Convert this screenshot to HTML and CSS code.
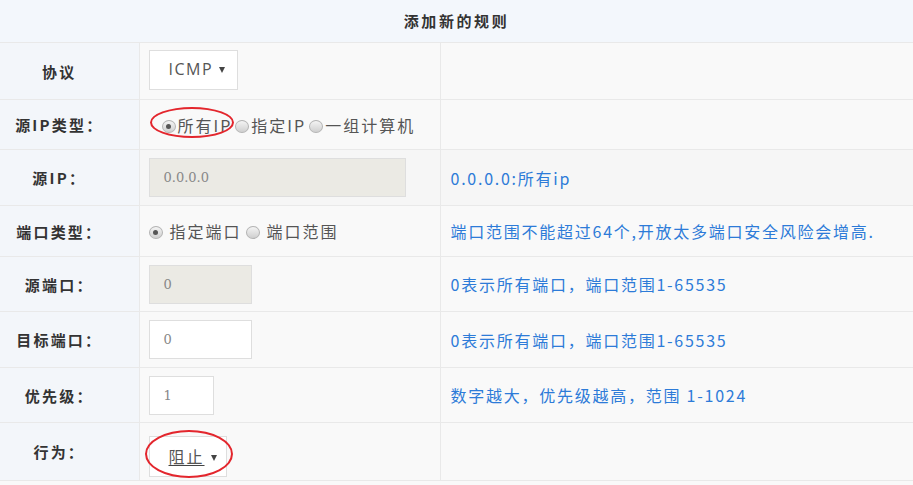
FILE: index.html
```html
<!DOCTYPE html>
<html lang="zh-CN">
<head>
  <meta charset="UTF-8">
  <title>添加新的规则</title>
  <link rel="stylesheet" href="styles.css">
</head>
<body>
  <table class="rule-table">
    <colgroup>
      <col class="col-label">
      <col class="col-input">
      <col class="col-tip">
    </colgroup>
    <tr class="head">
      <th colspan="3">添加新的规则</th>
    </tr>
    <tr class="r-proto">
      <td class="label">协议</td>
      <td><span class="select sel-proto">ICMP<i class="caret"></i></span></td>
      <td class="tip"></td>
    </tr>
    <tr class="r-iptype">
      <td class="label">源IP类型：</td>
      <td class="choice">
        <span class="mark mark-ip"><span class="radio checked"></span>所有IP</span><span class="radio"></span>指定IP<span class="radio"></span>一组计算机
      </td>
      <td class="tip"></td>
    </tr>
    <tr class="r-ip gray">
      <td class="label">源IP：</td>
      <td><span class="field disabled w-ip">0.0.0.0</span></td>
      <td class="tip">0.0.0.0:所有ip</td>
    </tr>
    <tr class="r-porttype">
      <td class="label">端口类型：</td>
      <td class="choice spaced">
        <span class="radio checked"></span>指定端口<span class="radio"></span>端口范围
      </td>
      <td class="tip">端口范围不能超过64个,开放太多端口安全风险会增高.</td>
    </tr>
    <tr class="r-sport">
      <td class="label">源端口：</td>
      <td><span class="field disabled w-port">0</span></td>
      <td class="tip">0表示所有端口，端口范围1-65535</td>
    </tr>
    <tr class="r-dport">
      <td class="label">目标端口：</td>
      <td><span class="field w-port">0</span></td>
      <td class="tip">0表示所有端口，端口范围1-65535</td>
    </tr>
    <tr class="r-prio">
      <td class="label">优先级：</td>
      <td><span class="field w-prio">1</span></td>
      <td class="tip">数字越大，优先级越高，范围 1-1024</td>
    </tr>
    <tr class="r-action">
      <td class="label">行为：</td>
      <td><span class="mark mark-action"><span class="select sel-action"><u>阻止</u><i class="caret"></i></span></span></td>
      <td class="tip"></td>
    </tr>
  </table>
</body>
</html>
```

FILE: styles.css
```css
body {
  margin: 0;
  padding: 0;
  font-family: "Noto Sans CJK SC", "Liberation Sans", sans-serif;
  font-size: 14px;
  color: #333;
  background: #f9f9f9;
}

.rule-table {
  width: 913px;
  border-collapse: collapse;
  table-layout: fixed;
}

.col-label { width: 139px; }
.col-input { width: 301px; }

.rule-table th,
.rule-table td {
  border: 1px solid #e9e9e9;
  padding: 0;
  vertical-align: middle;
}

.head th {
  height: 40px;
  background: #f3f7fc;
  font-size: 15px;
  letter-spacing: 2.6px;
  font-weight: bold;
  text-align: center;
  border-top: none;
  border-left: none;
  border-right: none;
  padding-bottom: 2px;
}

.rule-table td {
  background: #f9f9f9;
  padding-left: 9px;
  font-size: 16px;
  color: #555;
}

.rule-table td:first-child { border-left: none; }
.rule-table td:last-child { border-right: none; }

.rule-table td.label {
  background: #f3f6fa;
  font-weight: bold;
  font-size: 15px;
  letter-spacing: 2.2px;
  color: #333;
  text-align: center;
  padding: 0 20px 0 0;
}

.rule-table td.tip {
  padding-left: 10px;
  color: #2d7bd8;
  font-size: 16px;
  letter-spacing: 1.75px;
}

.rule-table tr.gray td:not(.label) { background: #f6f6f6; }

.r-proto td { height: 56px; }
.r-iptype td { height: 49px; }
.r-ip td { height: 55px; }
.r-porttype td { height: 50px; }
.r-sport td { height: 54px; }
.r-dport td { height: 55px; }
.r-prio td { height: 54px; }
.r-action td { height: 57px; }

/* inputs */
.select,
.field {
  display: inline-block;
  box-sizing: border-box;
  height: 39px;
  line-height: 37px;
  border: 1px solid #dedede;
  background: #fff;
  vertical-align: middle;
}

.select {
  padding-left: 19px;
  color: #555;
  font-size: 16px;
}

.sel-proto {
  width: 89px;
  height: 40px;
  margin-top: -2px;
  font-family: "Open Sans", "Noto Sans CJK SC", sans-serif;
  letter-spacing: 1.5px;
}

.sel-action {
  width: 78px;
  height: 41px;
  line-height: 39px;
  margin-top: 10px;
  letter-spacing: 2px;
}

.sel-action u { text-decoration-color: #444; text-underline-offset: 2px; }

.caret {
  display: inline-block;
  margin-left: 6px;
  border-left: 3.5px solid transparent;
  border-right: 3.5px solid transparent;
  border-top: 6px solid #444;
  vertical-align: middle;
  margin-top: -2px;
}

.field {
  padding-left: 14px;
  font-family: "DejaVu Serif", "Liberation Serif", serif;
  font-size: 13px;
  color: #888;
}

.field.disabled { background: #ebeae4; }

.w-ip { width: 257px; }
.w-port { width: 103px; }
.w-prio { width: 65px; }

/* radios */
.choice {
  letter-spacing: 2px;
}

.rule-table td.choice { padding-left: 22px; }
.rule-table td.choice.spaced { padding-left: 9px; }

.radio {
  display: inline-block;
  box-sizing: border-box;
  width: 14px;
  height: 13px;
  border-radius: 50%;
  border: 1px solid #b4b4b4;
  background: linear-gradient(#f4f4f4, #cfcfcf);
  vertical-align: -1px;
  position: relative;
  margin: 0 2px 0 3px;
}

.mark .radio { margin-left: 0; }

.spaced .radio { margin: 0 7px 0 4px; }
.spaced .radio:first-child { margin-left: 0; }

.radio.checked::after {
  content: "";
  position: absolute;
  left: 3.5px;
  top: 3px;
  width: 5px;
  height: 5px;
  border-radius: 50%;
  background: #555;
}

/* red annotation rings */
.mark {
  position: relative;
  display: inline-block;
}

.mark::after {
  content: "";
  position: absolute;
  border: 2px solid #e3262d;
  border-radius: 50%;
  pointer-events: none;
}

.mark-ip::after {
  left: -12px;
  top: -6px;
  width: 80px;
  height: 27px;
}

.mark-action::after {
  left: -4px;
  top: 4px;
  width: 84px;
  height: 44px;
}
```
